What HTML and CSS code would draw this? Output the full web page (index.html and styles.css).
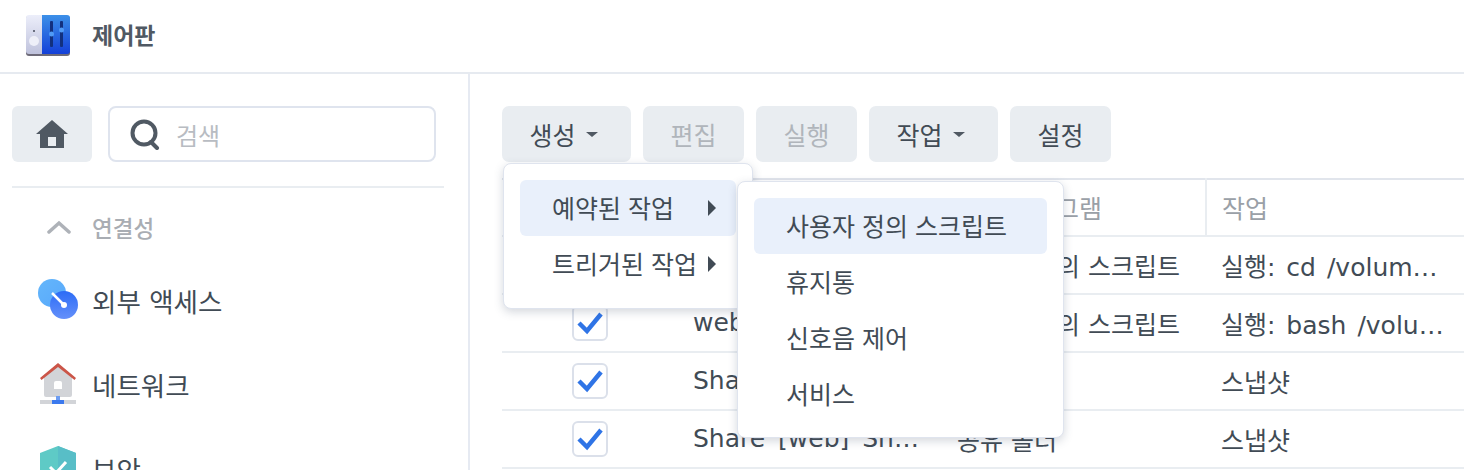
FILE: index.html
```html
<!doctype html>
<html lang="ko">
<head>
  <meta charset="UTF-8">
  <title>제어판</title>
  <link rel="stylesheet" href="styles.css">
</head>
<body>

  <div class="titleBar">
    <svg class="appIcon" width="46" height="42" viewBox="0 0 46 42">
      <defs>
        <linearGradient id="panelLeft" x1="0" y1="0" x2="0" y2="1">
          <stop offset="0" stop-color="#eceefa"/>
          <stop offset="1" stop-color="#bfc2dc"/>
        </linearGradient>
        <linearGradient id="panelRight" x1="0" y1="0" x2="0" y2="1">
          <stop offset="0" stop-color="#3c90e8"/>
          <stop offset="1" stop-color="#1440d8"/>
        </linearGradient>
      </defs>
      <rect x="1" y="2" width="44" height="40" rx="3" fill="#6d6a78"/>
      <path d="M4 1h13v39H4a3 3 0 0 1-3-3V4a3 3 0 0 1 3-3z" fill="url(#panelLeft)"/>
      <path d="M17 1h25a3 3 0 0 1 3 3v33a3 3 0 0 1-3 3H17z" fill="url(#panelRight)"/>
      <rect x="8" y="16" width="2" height="2" fill="#6b6f80"/>
      <circle cx="9" cy="27" r="5" fill="#eeeff8"/>
      <rect x="25" y="7" width="3" height="26" rx="1" fill="#12307e"/>
      <rect x="35" y="7" width="3" height="26" rx="1" fill="#12307e"/>
      <circle cx="26.500" cy="20" r="2.500" fill="#4f9af5"/>
      <circle cx="36.500" cy="16" r="2.500" fill="#4f9af5"/>
    </svg>
    <span class="appTitle">제어판</span>
  </div>

  <div class="content">

    <div class="sidebar">
      <div class="searchRow">
        <button class="homeButton">
          <svg width="32" height="28" viewBox="0 0 32 28">
            <path d="M16 0L32 14H28V28H4V14H0zM12 17v9h8v-9z" fill="#505963" fill-rule="evenodd"/>
          </svg>
        </button>
        <div class="searchBox">
          <svg width="30" height="32" viewBox="0 0 30 32">
            <circle cx="14" cy="15" r="11.500" fill="none" stroke="#505963" stroke-width="4"/>
            <path d="M21 24l6 6" stroke="#505963" stroke-width="4" stroke-linecap="round"/>
          </svg>
          <span class="searchHint">검색</span>
        </div>
      </div>

      <div class="sectionTitle">
        <svg width="24" height="14" viewBox="0 0 24 14">
          <path d="M2 12L12 3l10 9" fill="none" stroke="#aeb2b8" stroke-width="3.500" stroke-linecap="round"/>
        </svg>
        <span>연결성</span>
      </div>

      <div class="navItem">
        <svg class="navIcon" width="42" height="42" viewBox="0 0 42 42">
          <defs>
            <linearGradient id="dialBack" x1="0" y1="0" x2="1" y2="1">
              <stop offset="0" stop-color="#64b6fb"/>
              <stop offset="1" stop-color="#58a8fb"/>
            </linearGradient>
            <linearGradient id="dialFront" x1="0" y1="0" x2="0" y2="1">
              <stop offset="0" stop-color="#2c6cf6"/>
              <stop offset="1" stop-color="#6590fa"/>
            </linearGradient>
          </defs>
          <circle cx="14" cy="14" r="14" fill="url(#dialBack)"/>
          <circle cx="26" cy="26" r="14" fill="url(#dialFront)"/>
          <path d="M14 14L26 26" stroke="#fff" stroke-width="2.500"/>
          <circle cx="26" cy="26" r="3" fill="#fff"/>
        </svg>
        <span>외부 액세스</span>
      </div>

      <div class="navItem">
        <svg class="navIcon" width="42" height="44" viewBox="0 0 42 44">
          <path d="M6 13L20 3l14 10v20a2 2 0 0 1-2 2H8a2 2 0 0 1-2-2z" fill="#d2d4d8"/>
          <path d="M2 16L20 1l18 15-1.500 2L20 5 3.500 18z" fill="#cb5548"/>
          <path d="M16 21a2 2 0 0 1 2-2h4a2 2 0 0 1 2 2v6h-8z" fill="#fff"/>
          <rect x="2" y="38" width="36" height="4" fill="#d2d4d8"/>
          <rect x="14" y="38" width="12" height="4" fill="#3b79ee"/>
          <rect x="18" y="34" width="4" height="4" fill="#6d9df2"/>
        </svg>
        <span>네트워크</span>
      </div>

      <div class="navItem">
        <svg class="navIcon" width="42" height="44" viewBox="0 0 42 44">
          <path d="M20 0L38 7v23c0 6-10 11-18 13C12 41 2 36 2 30V7z" fill="#5ecac6"/>
          <path d="M20 0L38 7v23c0 6-10 11-18 13z" fill="#58bec7"/>
          <path d="M12 21l6 6 10-11" fill="none" stroke="#fff" stroke-width="3"/>
        </svg>
        <span>보안</span>
      </div>
    </div>

    <div class="main">
      <div class="toolbar">
        <button class="toolButton hasCaret">생성<i class="caret"></i></button>
        <button class="toolButton disabled">편집</button>
        <button class="toolButton disabled">실행</button>
        <button class="toolButton hasCaret">작업<i class="caret"></i></button>
        <button class="toolButton">설정</button>
      </div>

      <table class="taskTable">
        <colgroup>
          <col class="colCheck">
          <col class="colName">
          <col class="colProgram">
          <col class="colAction">
        </colgroup>
        <thead>
          <tr>
            <th>사용</th>
            <th>이름</th>
            <th>응용 프로그램</th>
            <th>작업</th>
          </tr>
        </thead>
        <tbody>
          <tr>
            <td><span class="check"></span></td>
            <td>backup</td>
            <td>사용자 정의 스크립트</td>
            <td>실행: cd /volume1/docker/backup.sh</td>
          </tr>
          <tr>
            <td><span class="check"><svg width="30" height="26" viewBox="0 0 30 26"><path d="M4 13l8 8L26 4" fill="none" stroke="#2f74e6" stroke-width="4.500"/></svg></span></td>
            <td>web</td>
            <td>사용자 정의 스크립트</td>
            <td>실행: bash /volume1/web/deploy.sh</td>
          </tr>
          <tr>
            <td><span class="check"><svg width="30" height="26" viewBox="0 0 30 26"><path d="M4 13l8 8L26 4" fill="none" stroke="#2f74e6" stroke-width="4.500"/></svg></span></td>
            <td>Share [docker] Snapshot</td>
            <td>공유 폴더</td>
            <td>스냅샷</td>
          </tr>
          <tr>
            <td><span class="check"><svg width="30" height="26" viewBox="0 0 30 26"><path d="M4 13l8 8L26 4" fill="none" stroke="#2f74e6" stroke-width="4.500"/></svg></span></td>
            <td>Share [web] Snapshot</td>
            <td>공유 폴더</td>
            <td>스냅샷</td>
          </tr>
        </tbody>
      </table>

      <div class="menu createMenu">
        <div class="menuItem active">예약된 작업<i class="arrow"></i></div>
        <div class="menuItem">트리거된 작업<i class="arrow"></i></div>

        <div class="menu subMenu">
          <div class="menuItem active">사용자 정의 스크립트</div>
          <div class="menuItem">휴지통</div>
          <div class="menuItem">신호음 제어</div>
          <div class="menuItem">서비스</div>
        </div>
      </div>
    </div>

  </div>

</body>
</html>
```

FILE: styles.css
```css
html, body {
  height: 100%;
  margin: 0;
  padding: 0;
  overflow: hidden;
}

body {
  background-color: #fff;
  color: #414b55;
  font-family: Inter, "Noto Sans CJK KR", sans-serif;
  font-size: 25px;
}

button {
  font: inherit;
  border: 0;
  margin: 0;
}

.titleBar {
  height: 74px;
  box-sizing: border-box;
  padding: 0 0 4px 25px;
  display: flex;
  align-items: center;
  border-bottom: 2px solid #e6eaf0;
}

.appIcon {
  margin-top: 2px;
}

.appTitle {
  margin-left: 21px;
  font-size: 23px;
  font-weight: 700;
  color: #505963;
}

.content {
  display: flex;
  height: 396px;
}

/* left navigation */
.sidebar {
  width: 470px;
  flex: none;
  box-sizing: border-box;
  padding: 32px 24px 0 12px;
  border-right: 2px solid #e6eaf2;
  overflow: hidden;
  font-size: 26.500px;
}

.searchRow {
  display: flex;
  gap: 16px;
  width: 432px;
  padding-bottom: 24px;
  border-bottom: 2px solid #e9edf1;
}

.homeButton {
  width: 80px;
  height: 56px;
  background-color: #e9edf1;
  border-radius: 6px;
  display: flex;
  align-items: center;
  justify-content: center;
}

.searchBox {
  width: 328px;
  height: 56px;
  box-sizing: border-box;
  border: 2px solid #dfe4ee;
  border-radius: 8px;
  display: flex;
  align-items: center;
  padding-left: 20px;
  gap: 16px;
}

.searchHint {
  color: #b8bcc2;
  font-size: 24px;
}

.sectionTitle {
  display: flex;
  align-items: center;
  height: 40px;
  margin-top: 19px;
  margin-bottom: 11px;
  padding-left: 35px;
  color: #a9adb3;
  font-size: 22.500px;
  font-weight: 500;
}

.sectionTitle span {
  margin-left: 21px;
}

.navItem {
  display: flex;
  align-items: center;
  height: 84px;
  padding-left: 26px;
  word-spacing: 1px;
}

.navIcon {
  flex: none;
  margin-right: 12px;
}

/* right side with the toolbar and the table */
.main {
  flex: 1;
  min-width: 0;
  padding: 32px 0 0 32px;
  position: relative;
}

.toolbar {
  display: flex;
  gap: 12px;
}

.toolButton {
  height: 56px;
  padding: 0 27.500px;
  background-color: #e9edf1;
  border-radius: 7px;
  color: #414b55;
  display: flex;
  align-items: center;
}

.toolButton.hasCaret {
  padding-right: 33.500px;
}

.toolButton.disabled {
  color: #b0b5bb;
}

.caret {
  width: 0;
  height: 0;
  margin-left: 10px;
  border-left: 6px solid transparent;
  border-right: 6px solid transparent;
  border-top: 5px solid #505963;
}

.taskTable {
  margin-top: 16px;
  width: 962px;
  table-layout: fixed;
  border-collapse: collapse;
  border-top: 2px solid #e1e5ec;
}

.colCheck { width: 176px; }
.colName { width: 264px; }
.colProgram { width: 264px; }
.colAction { width: 258px; }

.taskTable th {
  height: 53px;
  padding: 0 15px 2px;
  text-align: left;
  font-weight: 400;
  color: #9aa0a7;
  border-bottom: 2px solid #e9edf1;
}

.taskTable td {
  height: 55px;
  padding: 0 15px 1px;
  font-family: "DejaVu Sans", "Noto Sans CJK KR", sans-serif;
  white-space: nowrap;
  overflow: hidden;
  text-overflow: ellipsis;
  border-bottom: 2px solid #e9edf1;
}

.taskTable th:last-child {
  border-left: 2px solid #e9edf1;
}

.taskTable td:first-child {
  padding: 0;
  text-align: center;
}

.taskTable td:nth-child(2) {
  word-spacing: 5px;
}

.taskTable td:last-child {
  word-spacing: 3px;
}

.check {
  width: 32px;
  height: 32px;
  border: 2px solid #dbe0ea;
  border-radius: 6px;
  display: inline-flex;
  align-items: center;
  justify-content: center;
  vertical-align: middle;
}

/* dropdown menus lie over the table */
.menu {
  position: absolute;
  box-sizing: border-box;
  padding: 16px;
  background-color: #fff;
  border: 1px solid #dfe4ee;
  border-radius: 8px;
  box-shadow: 0 3px 10px rgba(60, 75, 100, 0.22);
}

.createMenu {
  left: 33px;
  top: 89px;
  width: 250px;
  height: 146px;
}

.subMenu {
  left: 233px;
  top: 17px;
  width: 327px;
  height: 257px;
}

.menuItem {
  height: 56px;
  box-sizing: border-box;
  padding: 0 0 2px 32px;
  display: flex;
  align-items: center;
  border-radius: 6px;
  white-space: nowrap;
  position: relative;
}

.menuItem.active {
  background-color: #e9f0fb;
}

.arrow {
  position: absolute;
  left: 188px;
  top: 20px;
  width: 0;
  height: 0;
  border-top: 8px solid transparent;
  border-bottom: 8px solid transparent;
  border-left: 8px solid #414b55;
}
```
